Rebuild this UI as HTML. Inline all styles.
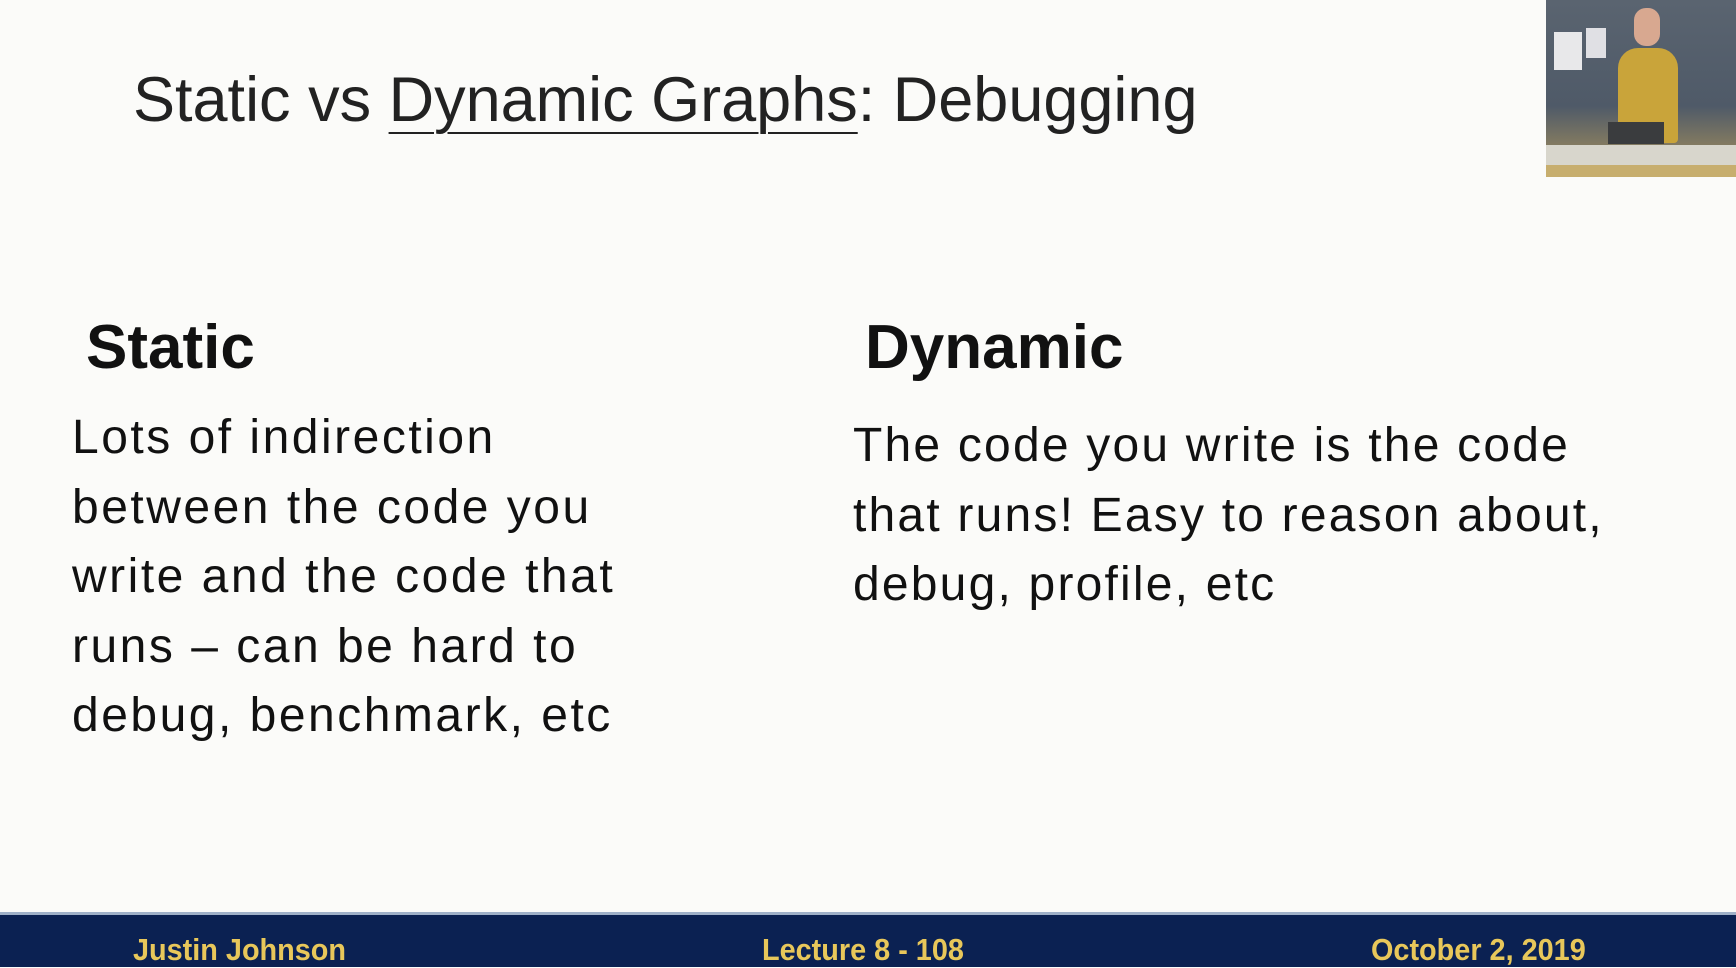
<!DOCTYPE html>
<html><head><meta charset="utf-8"><style>
body{margin:0;width:1736px;height:964px;overflow:hidden;background:#fbfbf9;position:relative;font-family:"Liberation Sans",sans-serif;color:#111}
.t{position:absolute;white-space:nowrap}
#title{left:133px;top:60px;font-size:63px;color:#222;line-height:80px;letter-spacing:0px}
#title u{text-decoration-thickness:2px;text-underline-offset:11px}
h2{margin:0;position:absolute;font-size:62px;font-weight:bold;line-height:70px}
.p{position:absolute;font-size:48px;line-height:69.5px;white-space:nowrap;letter-spacing:2.5px}
#foot{position:absolute;left:0;top:912px;width:1736px;height:52px;background:#0b2152;border-top:3px solid #9fb0c8}
.f{position:absolute;top:17px;color:#e8c75a;font-size:31px;font-weight:bold;transform:scaleX(0.93);transform-origin:left}
#vid{position:absolute;left:1546px;top:0;width:190px;height:177px;background:linear-gradient(180deg,#5a6470 0%,#4f5a68 60%,#8a7f60 85%,#c9b98a 100%)}
</style></head><body>
<div class="t" id="title">Static vs <u>Dynamic Graphs</u>: Debugging</div>
<h2 style="left:86px;top:313px">Static</h2>
<h2 style="left:865px;top:313px">Dynamic</h2>
<div class="p" style="left:72px;top:403px">Lots of indirection<br>between the code you<br>write and the code that<br>runs – can be hard to<br>debug, benchmark, etc</div>
<div class="p" style="left:853px;top:411px;letter-spacing:2.2px">The code you write is the code<br>that runs! Easy to reason about,<br>debug, profile, etc</div>
<div id="vid">
<div style="position:absolute;left:8px;top:32px;width:28px;height:38px;background:#e8e8ea"></div>
<div style="position:absolute;left:40px;top:28px;width:20px;height:30px;background:#e0e0e4"></div>
<div style="position:absolute;left:72px;top:48px;width:60px;height:95px;background:#c9a43a;border-radius:20px 20px 4px 4px"></div>
<div style="position:absolute;left:88px;top:8px;width:26px;height:38px;background:#d8a890;border-radius:12px"></div>
<div style="position:absolute;left:62px;top:122px;width:56px;height:22px;background:#3a3c3e"></div>
<div style="position:absolute;left:0;top:145px;width:190px;height:20px;background:#d8d6cc"></div>
<div style="position:absolute;left:0;top:165px;width:190px;height:12px;background:#c7ae6e"></div>
</div>
<div id="foot">
<div class="f" style="left:133px">Justin Johnson</div>
<div class="f" style="left:762px">Lecture 8 - 108</div>
<div class="f" style="left:1371px">October 2, 2019</div>
</div>
</body></html>
